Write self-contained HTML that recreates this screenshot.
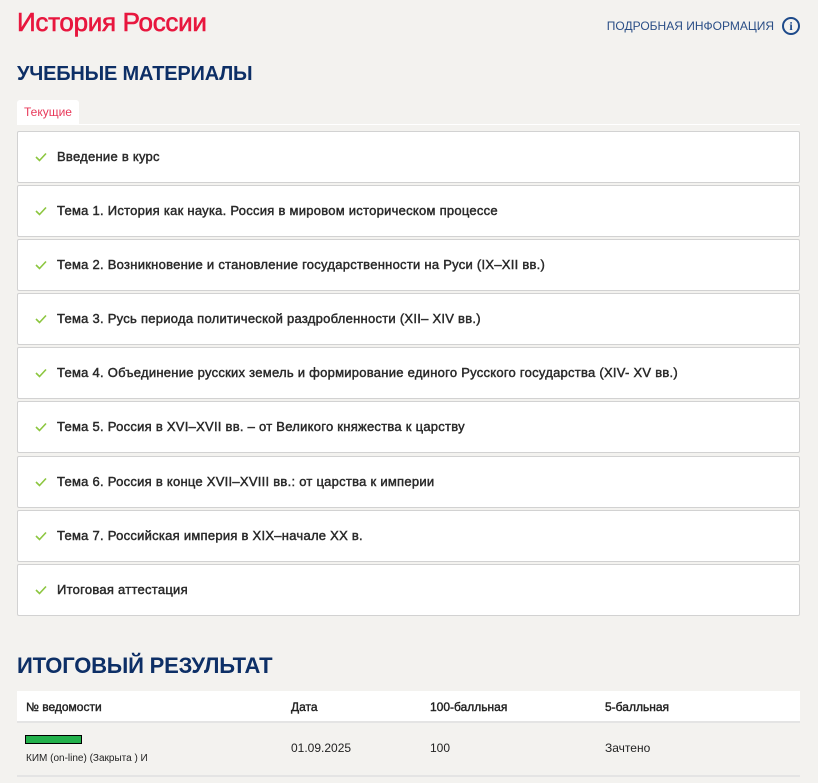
<!DOCTYPE html>
<html><head><meta charset="utf-8"><style>
body{margin:0;background:#f3f2ef;font-family:"Liberation Sans",sans-serif;width:818px;height:783px;overflow:hidden;position:relative}
h1{position:absolute;left:17px;top:7px;margin:0;font-size:26px;font-weight:normal;color:#e8173e;letter-spacing:-0.3px;-webkit-text-stroke:0.6px #e8173e}
.info{position:absolute;right:18px;top:17px;font-size:12px;color:#2a4e86;display:flex;align-items:center}
.info .c{width:14px;height:14px;border:2px solid #1d4a8a;border-radius:50%;margin-left:8px;font-size:12px;font-weight:bold;color:#1d4a8a;text-align:center;line-height:14px;font-family:"Liberation Serif",serif}
h2{position:absolute;left:17px;margin:0;font-size:20px;font-weight:bold;color:#0d2f66;letter-spacing:-0.2px}
.tab{position:absolute;left:17px;top:100px;width:62px;height:25px;background:#fff;border-radius:3px 3px 0 0;font-size:12px;color:#e8395a;text-align:center;line-height:25px}
.line{position:absolute;left:17px;top:124px;width:783px;height:1px;background:#fff}
.card{position:absolute;left:17px;width:781px;height:50px;background:#fff;border:1px solid #d2d2d2;border-radius:2px;font-size:13px;color:#2a2a2a;line-height:50px}
.card span.t{position:absolute;left:39px;font-weight:normal;letter-spacing:0.26px;-webkit-text-stroke:0.45px #2a2a2a}
.card svg{position:absolute;left:17px;top:20px}
.tbl{position:absolute;left:17px;top:691px;width:783px;font-size:12px;color:#222}
.hr{height:30px;background:#fff;border-bottom:2px solid #e4e4e4;position:relative}
.hr span{-webkit-text-stroke:0.4px #222}
.dr{height:52px;border-bottom:2px solid #e4e4e4;position:relative}
.col{position:absolute}
</style></head><body>
<h1>История России</h1>
<div class="info">ПОДРОБНАЯ ИНФОРМАЦИЯ<div class="c">i</div></div>
<h2 style="top:63px">УЧЕБНЫЕ МАТЕРИАЛЫ</h2>
<div class="tab">Текущие</div>
<div class="line"></div>
<div class="card" style="top:131px"><svg width="12" height="10" viewBox="0 0 12 10"><path d="M1 5 L4.5 8.5 L11 1.5" fill="none" stroke="#8cc63f" stroke-width="1.6"/></svg><span class="t">Введение в курс</span></div>
<div class="card" style="top:185px"><svg width="12" height="10" viewBox="0 0 12 10"><path d="M1 5 L4.5 8.5 L11 1.5" fill="none" stroke="#8cc63f" stroke-width="1.6"/></svg><span class="t">Тема 1. История как наука. Россия в мировом историческом процессе</span></div>
<div class="card" style="top:239px"><svg width="12" height="10" viewBox="0 0 12 10"><path d="M1 5 L4.5 8.5 L11 1.5" fill="none" stroke="#8cc63f" stroke-width="1.6"/></svg><span class="t">Тема 2. Возникновение и становление государственности на Руси (IX–XII вв.)</span></div>
<div class="card" style="top:293px"><svg width="12" height="10" viewBox="0 0 12 10"><path d="M1 5 L4.5 8.5 L11 1.5" fill="none" stroke="#8cc63f" stroke-width="1.6"/></svg><span class="t">Тема 3. Русь периода политической раздробленности (XII– XIV вв.)</span></div>
<div class="card" style="top:347px"><svg width="12" height="10" viewBox="0 0 12 10"><path d="M1 5 L4.5 8.5 L11 1.5" fill="none" stroke="#8cc63f" stroke-width="1.6"/></svg><span class="t">Тема 4. Объединение русских земель и формирование единого Русского государства (XIV- XV вв.)</span></div>
<div class="card" style="top:401px"><svg width="12" height="10" viewBox="0 0 12 10"><path d="M1 5 L4.5 8.5 L11 1.5" fill="none" stroke="#8cc63f" stroke-width="1.6"/></svg><span class="t">Тема 5. Россия в XVI–XVII вв. – от Великого княжества к царству</span></div>
<div class="card" style="top:456px"><svg width="12" height="10" viewBox="0 0 12 10"><path d="M1 5 L4.5 8.5 L11 1.5" fill="none" stroke="#8cc63f" stroke-width="1.6"/></svg><span class="t">Тема 6. Россия в конце XVII–XVIII вв.: от царства к империи</span></div>
<div class="card" style="top:510px"><svg width="12" height="10" viewBox="0 0 12 10"><path d="M1 5 L4.5 8.5 L11 1.5" fill="none" stroke="#8cc63f" stroke-width="1.6"/></svg><span class="t">Тема 7. Российская империя в XIX–начале XX в.</span></div>
<div class="card" style="top:564px"><svg width="12" height="10" viewBox="0 0 12 10"><path d="M1 5 L4.5 8.5 L11 1.5" fill="none" stroke="#8cc63f" stroke-width="1.6"/></svg><span class="t">Итоговая аттестация</span></div>
<h2 style="top:653px;font-size:22px">ИТОГОВЫЙ РЕЗУЛЬТАТ</h2>
<div class="tbl">
<div class="hr">
<span class="col" style="left:9px;top:9px">№ ведомости</span>
<span class="col" style="left:274px;top:9px">Дата</span>
<span class="col" style="left:413px;top:9px">100-балльная</span>
<span class="col" style="left:588px;top:9px">5-балльная</span>
</div>
<div class="dr">
<div class="col" style="left:8px;top:12px;width:55px;height:7px;background:#22b04b;border:1px solid #000"></div>
<span class="col" style="left:9px;top:30px;font-size:10px">КИМ (on-line) (Закрыта ) И</span>
<span class="col" style="left:274px;top:18px">01.09.2025</span>
<span class="col" style="left:413px;top:18px">100</span>
<span class="col" style="left:588px;top:18px">Зачтено</span>
</div>
</div>
</body></html>
